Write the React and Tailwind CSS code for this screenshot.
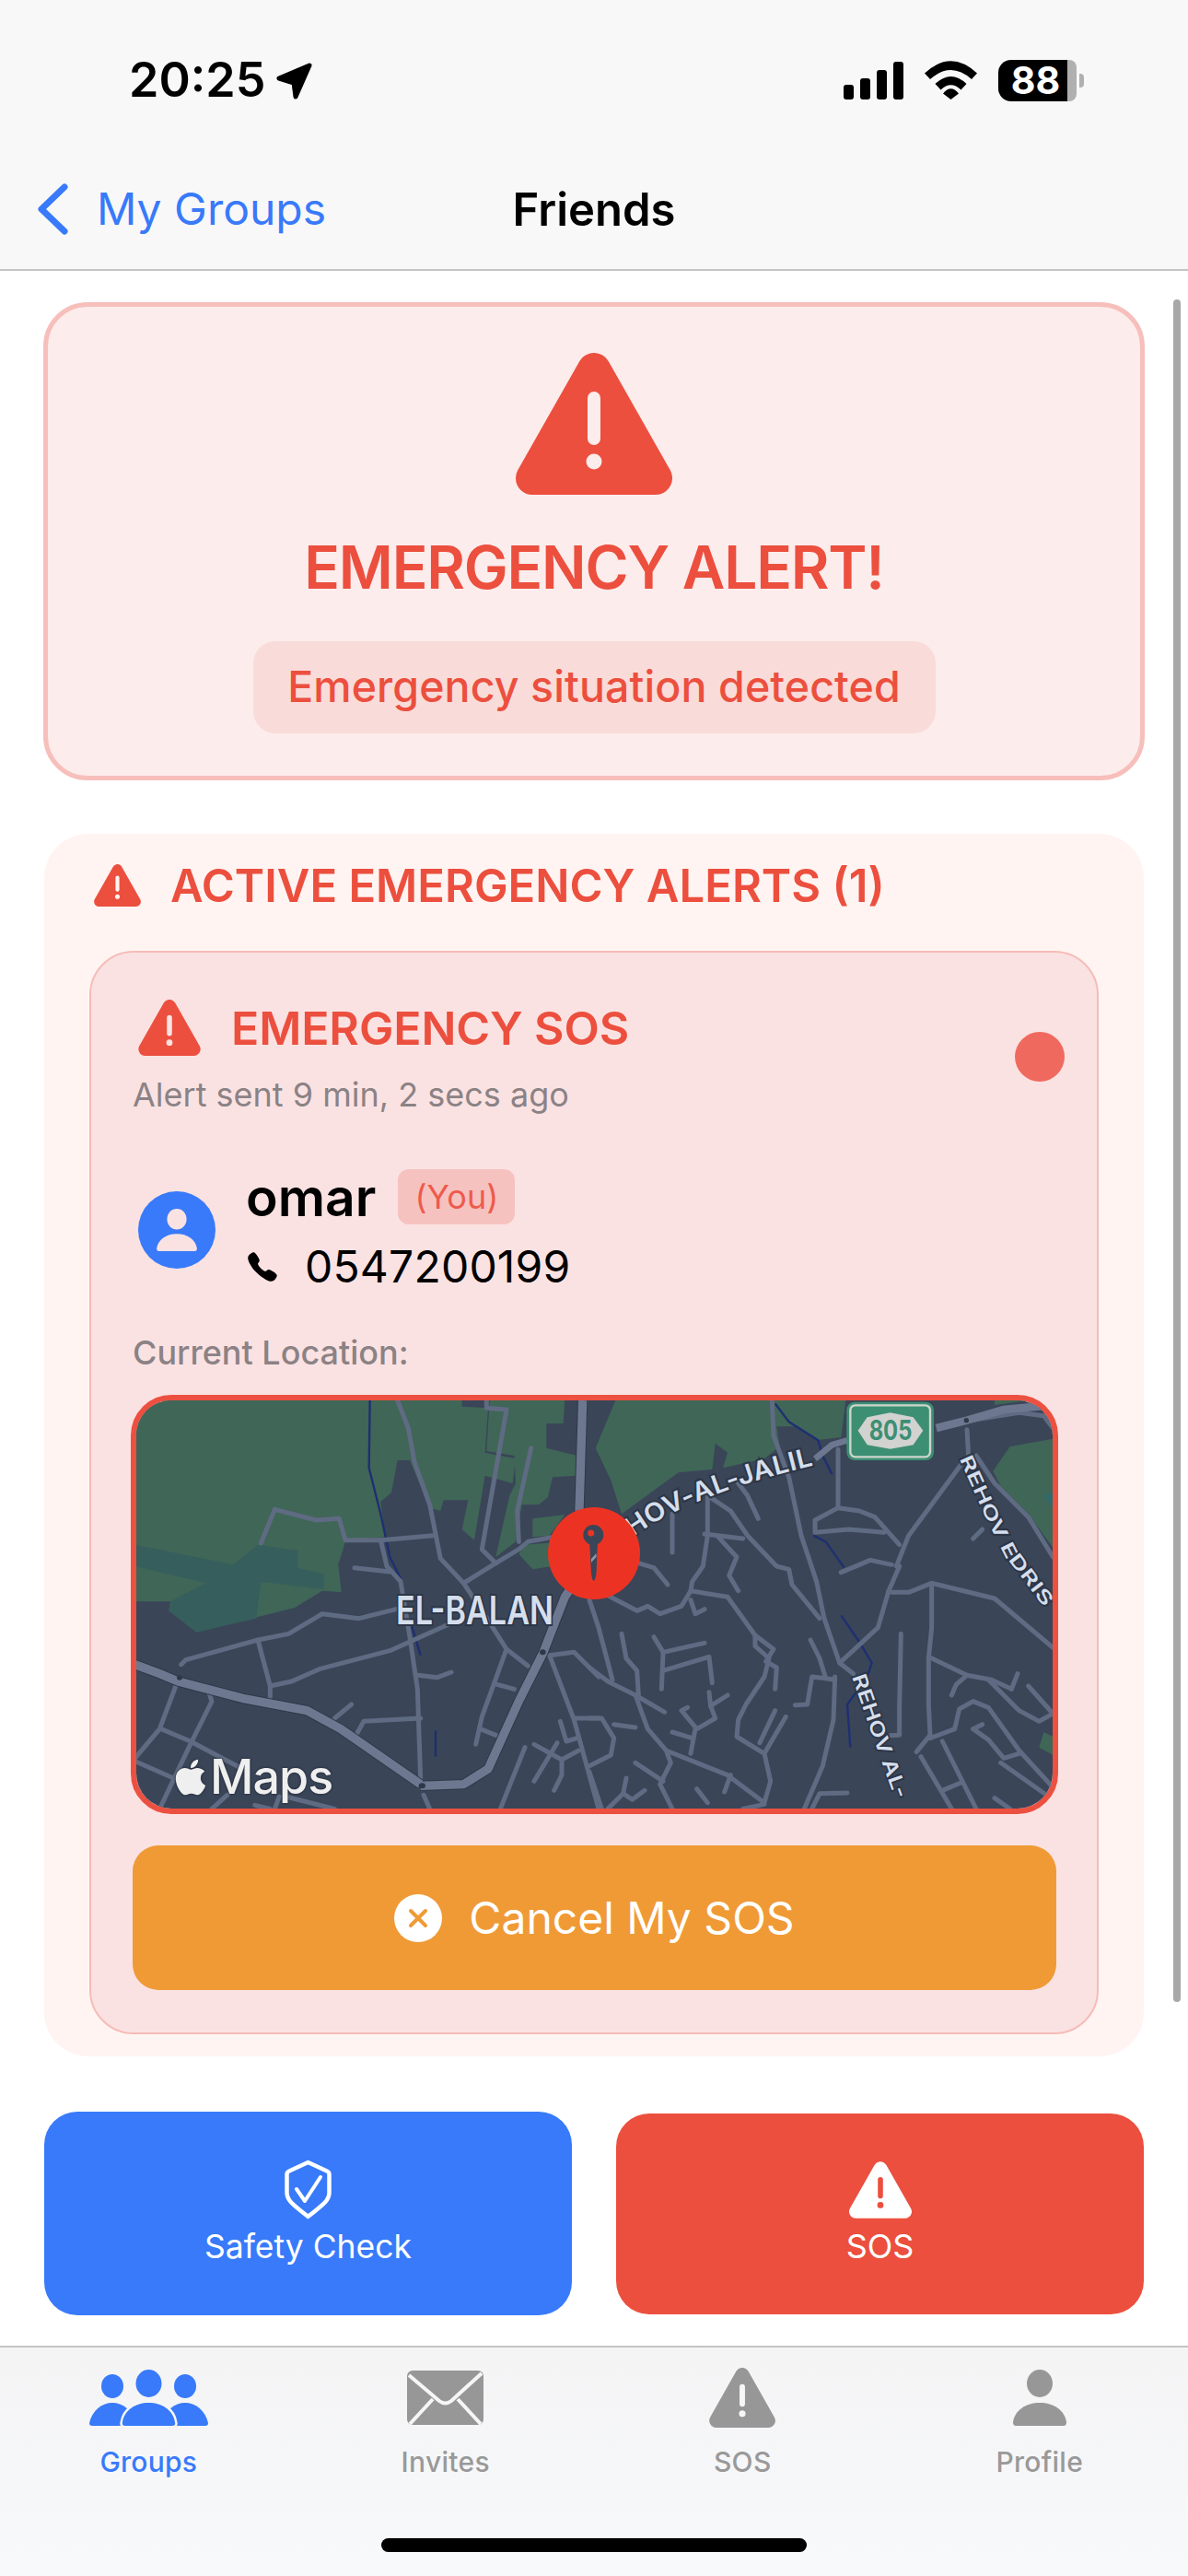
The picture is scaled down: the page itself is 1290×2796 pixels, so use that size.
import { FaApple } from 'react-icons/fa';
import { IoCall } from 'react-icons/io5';

const INK = 'font-[family-name:Inter,sans-serif]';

// map strokes, written in the coordinates of two 3x crops of the map
const leftRoads = [
  'M505 415 L460 525', 'M505 415 L640 450 L715 445 L735 515 L850 515 L1020 500',
  'M905 60 L940 150 L960 260 L1010 400 L1045 575 L1120 655 L1190 760 L1260 870 L1330 925',
  'M850 515 L870 600 L915 650 L945 830 L970 1000 L980 1290', 'M765 605 L880 618',
  'M1120 655 L1225 590 L1300 545 L1330 520 L1440 500', 'M1225 590 L1180 545 L1260 90 L1195 85 L1195 60',
  'M1340 215 L1295 420 L1300 520', 'M200 920 L215 905 L450 840 L550 820 L660 755 L780 770 L900 740',
  'M450 840 L490 990 L490 1025', 'M490 990 L560 975 L650 935 L880 875 L1070 790', 'M970 955 L1035 962 L1080 945',
  'M700 1095 L755 1050', 'M770 1150 L795 1105 L980 1095', 'M190 970 L130 1130 L50 1225',
  'M290 1010 L300 1040 L230 1180 L130 1390', 'M135 1130 L230 1170 L400 1260', 'M50 1235 L175 1290',
  'M1260 870 L1180 1090 L1160 1180', 'M1230 985 L1285 1000', 'M1175 1130 L1225 1150',
  'M1400 890 L1480 880 L1560 960', 'M1400 890 L1480 1100 L1560 1390', 'M1480 1095 L1560 1095',
  'M1320 1190 L1240 1390', 'M1350 1180 L1440 1230 L1495 1200', 'M1425 1175 L1350 1300',
  'M1440 1235 L1440 1280 L1415 1330', 'M1435 1105 L1455 1170 L1490 1160', 'M990 1345 L1010 1390',
  'M350 1345 L300 1390', 'M520 1350 L505 1390', 'M440 1378 L490 1390', 'M540 1350 L700 1390',
];
const leftMain = [
  'M50 920 L130 950 L190 975 L400 1030 L610 1070 L720 1130 L980 1310',
  'M980 1315 L1120 1310 L1200 1260 L1300 1040 L1380 880 L1450 700 L1490 640',
  'M1508 60 L1497 420',
];
const leftWater = ['M815 60 L812 280 L850 430 L880 570 L915 640', 'M925 680 L925 780', 'M950 790 L980 890', 'M1029 1135 L1029 1220'];

const rightRoads = [
  'M595 60 L600 175 L650 310 L690 500 L740 650 L765 770 L815 915', 'M485 330 L515 370 L550 445',
  'M385 370 L385 500 L370 600 L335 650 L330 680 L300 730 L230 755 L190 730 L155 745 L60 695',
  'M385 370 L460 420 L515 500 L610 600 L650 610 L660 660 L750 770', 'M375 495 L500 510',
  'M420 505 L480 570 L455 630 L485 680', 'M330 680 L450 700 L540 825 L600 870 L575 910 L610 930 L605 1000',
  'M540 825 L540 860 L585 900 L570 960 L510 1050 L485 1100 L480 1155 L570 1210 L640 1090', 'M555 1175 L605 1070',
  'M330 710 L345 755 L375 740', 'M270 430 L270 555', 'M160 590 L210 605 L255 660', 'M720 840 L750 900 L770 965 L800 970',
  'M770 965 L725 960 L710 1050 L670 1052', 'M810 220 L810 410 L880 420 L930 440 L1010 530',
  'M810 410 L735 450 L735 490 L845 480 L960 490', 'M820 620 L915 580 L985 595', 'M1230 155 L1235 240',
  'M1000 600 L1040 500 L1210 270', 'M975 680 L1010 600', 'M975 680 L940 800 L815 915',
  'M985 685 L1040 685 L1115 655 L1320 705 L1510 865', 'M1115 660 L1115 800 L1105 900 L1105 1050 L1110 1150',
  'M1015 820 L1010 1060 L1010 1150 L965 1152', 'M1105 895 L1230 955 L1310 970 L1375 1000 L1395 950',
  'M1230 955 L1195 985 L1180 1020', 'M1300 970 L1400 1070 L1465 1105 L1510 1080 L1430 990', 'M1110 1150 L1065 1205',
  'M1110 1160 L1190 1130 L1205 1065 L1250 1040 L1300 1060 L1400 1200 L1510 1320', 'M1080 1220 L1180 1390',
  'M1150 1170 L1260 1390', 'M1150 1330 L1210 1305', 'M1320 1355 L1370 1390', 'M1250 1130 L1280 1115',
  'M1250 1130 L1300 1165 L1350 1225 L1400 1210', 'M1340 1240 L1510 1360', 'M815 915 L860 950',
  'M800 960 L795 1100 L760 1250 L700 1390', 'M0 710 L30 800 L75 970',
  'M0 930 L60 975 L150 1020 L190 1130 L250 1200 L450 1280 L570 1370 L590 1300 L570 1210', 'M150 1020 L245 1075',
  'M105 820 L120 900 L155 940 L160 1020', 'M210 830 L240 880 L235 1000', 'M240 880 L375 850', 'M240 940 L390 895 L400 980',
  'M390 1010 L395 1055 L450 1020', 'M395 1055 L410 1095 L350 1130 L300 1070 L320 1060', 'M345 1130 L330 1210',
  'M270 1140 L335 1160', 'M250 1200 L265 1240 L230 1310 L270 1390', 'M150 1240 L240 1300', 'M120 1290 L110 1340 L140 1360 L180 1330',
  'M60 1390 L110 1340', 'M350 1325 L385 1370', 'M440 1335 L460 1280', 'M0 1095 L40 1095 L80 1160 L70 1215 L0 1250',
  'M80 1115 L150 1125', 'M0 1270 L40 1390', 'M725 1390 L750 1340 L840 1338', 'M500 1390 L570 1375',
  'M1240 125 L1400 100 L1480 110 L1510 150', 'M1260 240 L1320 330 L1430 440 L1510 570', 'M1280 480 L1250 510',
];
const rightWater = ['M605 70 L650 130 L745 190 L760 240 L790 300', 'M730 500 L770 520 L830 605', 'M820 760 L875 840 L920 915 L905 960 L840 1050 L850 1190'];

function MapDrawing() {
  const label = 'fill-[#d5deec] stroke-[#2d3646] font-semibold [paint-order:stroke]';
  return (
    <svg viewBox="0 0 995 443" className="block w-full h-[443px]">
      <rect width="995" height="443" fill="#3a4558" />
      <g transform="translate(-18 -20) scale(0.33333)">
        <path fill="#3f6657" d="M50 60 L1115 60 L1115 80 L1200 85 L1190 230 L1290 250 L1280 330 L1190 305 L1155 515 L1115 480 L1135 385 L1055 385 L1045 420 L1010 410 L945 255 L905 255 L885 360 L850 390 L865 505 L735 520 L712 595 L722 685 L660 680 L570 735 L250 815 L160 745 L165 715 L50 715 Z" />
        <path fill="#365e5c" d="M50 530 L370 595 L450 530 L580 550 L580 605 L665 625 L665 675 L460 650 L445 770 L250 815 L160 745 L165 715 L280 655 L50 600 Z" />
        <path fill="#3f6657" d="M1205 60 L1450 60 L1445 135 L1390 135 L1390 215 L1490 240 L1490 305 L1410 310 L1395 375 L1365 400 L1310 400 L1290 520 L1225 570 L1270 370 L1290 330 L1285 240 L1195 225 Z" />
        <path fill="#3f6657" d="M1345 445 L1450 432 L1400 500 L1345 505 Z M1300 560 L1345 610 L1410 600 L1450 520 L1320 530 Z" />
        {leftWater.map((d) => <path key={d} d={d} fill="none" stroke="#1e2f72" strokeWidth="7" />)}
        {leftRoads.map((d) => <path key={d} d={d} fill="none" stroke="#5f6b82" strokeWidth="15" strokeLinecap="round" strokeLinejoin="round" />)}
        {leftMain.map((d) => <path key={d} d={d} fill="none" stroke="#2f3848" strokeWidth="34" strokeLinejoin="round" />)}
        {leftMain.map((d) => <path key={d} d={d} fill="none" stroke="#6d7890" strokeWidth="28" strokeLinejoin="round" />)}
        <ellipse cx="195" cy="963" rx="9" ry="8" fill="#2f3848" />
        <ellipse cx="1378" cy="880" rx="10" ry="9" fill="#2f3848" />
        <ellipse cx="985" cy="1315" rx="11" ry="9" fill="#2f3848" />
      </g>
      <g transform="translate(492 -20) scale(0.33333)">
        <path fill="#3f6657" d="M85 60 L20 215 L70 320 L105 430 L290 295 L400 285 L410 200 L450 230 L435 280 L570 250 L620 210 L610 145 L680 145 L740 190 L820 180 L835 60 Z" />
        <path fill="#3f6657" d="M1510 185 L1370 210 L1315 290 L1340 340 L1430 430 L1510 540 Z M1510 1215 L1465 1190 L1480 1140 L1510 1155 Z M1320 60 L1430 60 L1320 75 Z" />
        <path fill="#2f6a6c" d="M1480 370 L1510 360 L1510 410 Z" />
        {rightWater.map((d) => <path key={d} d={d} fill="none" stroke="#1e2f72" strokeWidth="7" />)}
        {rightRoads.map((d) => <path key={d} d={d} fill="none" stroke="#5f6b82" strokeWidth="15" strokeLinecap="round" strokeLinejoin="round" />)}
        <path d="M1130 150 L1230 125 L1350 90 L1510 75" fill="none" stroke="#6d7890" strokeWidth="26" />
        <path d="M735 250 L790 205 L840 190" fill="none" stroke="#6d7890" strokeWidth="20" />
        <circle cx="1228" cy="125" r="8" fill="#2f3848" />
        <path id="jalil" d="M140 505 Q 340 360 760 265" fill="none" />
        <path id="edris" d="M1205 250 L1290 440 L1350 560 L1490 745" fill="none" />
        <path id="alj" d="M855 960 L925 1160 L1010 1400" fill="none" />
        <text className={`${INK} ${label}`} fontSize="84" strokeWidth="12" letterSpacing="1">
          <textPath href="#jalil" textLength="640" lengthAdjust="spacingAndGlyphs">HOV-AL-JALIL</textPath>
        </text>
        <text className={`${INK} ${label}`} fontSize="60" strokeWidth="10">
          <textPath href="#edris" textLength="560" lengthAdjust="spacingAndGlyphs">REHOV EDRIS</textPath>
        </text>
        <text className={`${INK} ${label}`} fontSize="64" strokeWidth="10">
          <textPath href="#alj" textLength="425" lengthAdjust="spacingAndGlyphs">REHOV AL-</textPath>
        </text>
        <rect x="838" y="65" width="284" height="190" rx="26" fill="#3d8f74" />
        <rect x="850" y="76" width="260" height="168" rx="16" fill="none" stroke="#cfd6cc" strokeWidth="7" />
        <path d="M875 158 L905 115 L980 100 L1055 115 L1087 158 L1055 205 L980 218 L905 205 Z" fill="#d2d2d0" />
        <text x="981" y="190" textAnchor="middle" fontSize="88" fontWeight="700" fill="#3d8f74" className={INK} textLength="140" lengthAdjust="spacingAndGlyphs">805</text>
      </g>
      <text x="282" y="243" fontSize="42" strokeWidth="4" className={`${INK} ${label}`} textLength="171" lengthAdjust="spacingAndGlyphs">EL-BALAN</text>
      <circle cx="497" cy="166" r="50" fill="#ec3323" />
      <circle cx="496.3" cy="146" r="11" fill="#3a4558" />
      <circle cx="493.7" cy="144" r="3.5" fill="#ec3323" />
      <path d="M492 152 L501 152 L499.5 188 Q496.5 204 494 188 Z" fill="#3a4558" />
      <path d="M494 172 L499.5 166 L499.5 170 L494 176 Z" fill="#8d97aa" />
    </svg>
  );
}

function Warn({ className, mark }) {
  return (
    <svg viewBox="0 0 170 154" className={className}>
      <polygon points="85,18 152,136 18,136" fill="currentColor" stroke="currentColor" strokeWidth="36" strokeLinejoin="round" />
      <rect x="78" y="42" width="14" height="58" rx="7" fill={mark} />
      <circle cx="85" cy="118" r="8.5" fill={mark} />
    </svg>
  );
}

function Shield() {
  return (
    <svg viewBox="0 0 53 65" className="w-[53px] h-[65px]" fill="none" stroke="#fff" strokeLinecap="round" strokeLinejoin="round">
      <path strokeWidth="4.5" d="M26.5 3 L47 12.5 Q49.5 13.5 49.5 16 V36 C49.5 44 44 48 26.5 62 C9 48 3.5 44 3.5 36 V16 Q3.5 13.5 6 12.5 Z" />
      <path strokeWidth="4" d="M14 32 L23 45 L40 19" />
    </svg>
  );
}

function Person({ className, head, body }) {
  return (
    <svg viewBox="0 0 58 61" className={className}>
      <ellipse cx="29" cy="15" rx="14" ry="15" fill={head} />
      <path d="M3 61 Q0 61 0 57 C2 44 14 36 29 36 C44 36 56 44 58 57 Q58 61 55 61 Z" fill={body} />
    </svg>
  );
}

function GroupsIcon() {
  return (
    <svg viewBox="0 0 129 61" className="w-[129px] h-[61px]" fill="#387afa">
      <ellipse cx="25" cy="18" rx="12" ry="13" />
      <ellipse cx="64.5" cy="15" rx="14" ry="15" />
      <ellipse cx="104" cy="18" rx="12" ry="13" />
      <path d="M3 61 Q0 61 0 58 C3 44 14 36 25 36 C36 36 47 44 50 58 Q50 61 47 61 Z" />
      <path d="M82 61 Q79 61 79 58 C82 44 93 36 104 36 C115 36 126 44 129 58 Q129 61 126 61 Z" />
      <path d="M39 61 Q35 61 36 57 C38 44 50 36 64.5 36 C79 36 91 44 93 57 Q94 61 90 61 Z" stroke="#f6f6f7" strokeWidth="5" paintOrder="stroke" />
    </svg>
  );
}

function Envelope() {
  return (
    <svg viewBox="0 0 83 59" className="w-[83px] h-[59px]">
      <rect width="83" height="59" rx="6" fill="#979797" />
      <path d="M2 5 L35 33 Q41.5 38 48 33 L81 3 M3 58 L28 31 M80 58 L55 31" fill="none" stroke="#f6f6f7" strokeWidth="4" />
    </svg>
  );
}

function StatusBar() {
  return (
    <div className="h-[174px] flex items-center justify-between pl-[140px] pr-[113px]">
      <div className="flex items-center gap-[11px]">
        <span className="text-[52px] leading-none font-semibold text-black">20:25</span>
        <svg viewBox="0 0 40 41" className="w-[40px] h-[41px]">
          <path d="M37 4 L4 18 L20 23 L22 38 Z" fill="#000" stroke="#000" strokeWidth="5" strokeLinejoin="round" />
        </svg>
      </div>
      <div className="flex items-center gap-[23px]">
        <div className="flex items-end gap-[7px] h-[41px]">
          <div className="w-[11px] h-[16px] rounded-[3px] bg-black" />
          <div className="w-[11px] h-[23px] rounded-[3px] bg-black" />
          <div className="w-[11px] h-[32px] rounded-[3px] bg-black" />
          <div className="w-[11px] h-[41px] rounded-[3px] bg-black" />
        </div>
        <svg viewBox="0 0 57 42" className="w-[57px] h-[42px]" fill="#000">
          <path d="M0 13.5 Q28.5 -13 57 13.5 L51 20 Q28.5 0 6 20 Z" />
          <path d="M11.5 25 Q28.5 9 45.5 25 L39.5 31.5 Q28.5 21 17.5 31.5 Z" />
          <path d="M20 35.5 Q28.5 25 37 35.5 L28.5 42 Z" />
        </svg>
        <div className="flex items-center gap-[3px]">
          <div className="w-[85px] h-[45px] flex">
            <div className="flex-1 rounded-l-[14px] bg-black flex items-center justify-center pl-[6px] text-white text-[41px] leading-none font-bold">88</div>
            <div className="w-[10px] rounded-r-[8px] bg-[#b0b0b0]" />
          </div>
          <div className="w-[5px] h-[15px] rounded-r-[4px] bg-[#b0b0b0]" />
        </div>
      </div>
    </div>
  );
}

function NavBar() {
  return (
    <div className="h-[106px] grid grid-cols-3 items-center">
      <div className="flex items-center pl-[41px] gap-[31px]">
        <svg viewBox="0 0 33 56" className="w-[33px] h-[56px]" fill="none" stroke="#387afa" strokeWidth="7" strokeLinecap="round" strokeLinejoin="round">
          <path d="M29 4 L4 28 L29 52" />
        </svg>
        <span className="text-[48px] leading-none whitespace-nowrap text-[#387afa]">My Groups</span>
      </div>
      <div className="text-center text-[49px] leading-none font-semibold text-black">Friends</div>
    </div>
  );
}

function AlertBanner() {
  return (
    <div className="h-[519px] border-[5px] border-[#f7bfbb] bg-[#fcecec] rounded-[48px] flex flex-col items-center pt-[50px]">
      <Warn className="w-[170px] h-[154px] text-[#ec4f3e]" mark="#fcecec" />
      <div className="mt-[40px] text-[64px] leading-[78px] font-semibold tracking-[-1.2px] text-[#ec4f3e]">EMERGENCY ALERT!</div>
      <div className="mt-[41px] h-[100px] w-[741px] rounded-[24px] bg-[#f9dcd9] flex items-center justify-center text-[46.5px] font-medium tracking-[0.1px] text-[#ec4f3e]">
        Emergency situation detected
      </div>
    </div>
  );
}

function SosCard() {
  return (
    <div className="relative border-2 border-[#f5bcb8] bg-[#fbe2e2] rounded-[48px] pl-[43px] pr-[42px] pt-[51px] pb-[46px]">
      <div className="absolute right-[35px] top-[86px] w-[54px] h-[54px] rounded-full bg-[#f0695f]" />
      <div className="flex items-center gap-[33px] pl-[8px]">
        <Warn className="w-[68px] h-[61px] text-[#ec4f3e]" mark="#fbe2e2" />
        <span className="text-[50px] leading-none font-semibold tracking-[-0.1px] text-[#ec4f3e]">EMERGENCY SOS</span>
      </div>
      <div className="mt-[20px] pl-[2px] text-[36px] leading-[44px] text-[#8b8285]">Alert sent 9 min, 2 secs ago</div>
      <div className="mt-[59px] flex items-center gap-[33px] pl-[8px]">
        <div className="w-[84px] h-[84px] rounded-full bg-[#387afa] flex items-center justify-center">
          <Person className="w-[44px] h-[46px]" head="#fbe2e2" body="#fbe2e2" />
        </div>
        <div>
          <div className="flex items-center h-[60px] gap-[24px]">
            <span className="text-[57px] leading-none font-semibold text-black">omar</span>
            <span className="h-[60px] w-[127px] rounded-[12px] bg-[#f5c2bf] flex items-center justify-center text-[36px] text-[#ee5a4c]">(You)</span>
          </div>
          <div className="mt-[20px] h-[51px] flex items-center gap-[28px]">
            <IoCall className="w-[36px] h-[36px] text-black" />
            <span className="text-[48px] leading-none tracking-[0.2px] text-black">0547200199</span>
          </div>
        </div>
      </div>
      <div className="mt-[46px] pl-[2px] text-[36px] leading-[44px] font-medium text-[#8b8285]">Current Location:</div>
      <div className="relative mt-[24px] h-[455px] border-[6px] border-[#ec5040] rounded-[44px] overflow-hidden">
        <MapDrawing />
        <div className="absolute left-[40px] bottom-[5px] flex items-center gap-[2px] text-[#efefef] [filter:drop-shadow(0_0_1.5px_#1c2230)]">
          <FaApple className="w-[38px] h-[44px]" />
          <span className="text-[52px] leading-[58px] font-medium tracking-[-1px]">Maps</span>
        </div>
      </div>
      <div className="mt-[34px] mx-[2px] h-[157px] rounded-[28px] bg-[#f09a36] flex items-center justify-center gap-[29px]">
        <svg viewBox="0 0 52 52" className="w-[52px] h-[52px]">
          <circle cx="26" cy="26" r="26" fill="#fff" />
          <path d="M18 18 L34 34 M34 18 L18 34" stroke="#f09a36" strokeWidth="4" strokeLinecap="round" />
        </svg>
        <span className="text-[48px] leading-none text-white">Cancel My SOS</span>
      </div>
    </div>
  );
}

function TabItem({ label, active, children }) {
  return (
    <div className="flex flex-col items-center">
      <div className="h-[65px] flex items-center justify-center">{children}</div>
      <div className={active ? 'mt-[19px] text-[30px] leading-[36px] font-medium tracking-[0.2px] text-[#387afa]' : 'mt-[19px] text-[30px] leading-[36px] font-medium tracking-[0.3px] text-[#999999]'}>{label}</div>
    </div>
  );
}

export default function App() {
  return (
    <div className={`${INK} w-[1290px] h-[2796px] bg-white flex flex-col overflow-hidden`}>
      <header className="h-[294px] bg-[#f8f8f8] border-b-2 border-[#c4c4c4]">
        <StatusBar />
        <NavBar />
      </header>

      <main className="relative flex-1 px-[47px] pt-[34px]">
        <div className="absolute left-[1274px] top-[31px] w-[8px] h-[1848px] rounded-full bg-[#a8a8a8]" />
        <AlertBanner />

        <section className="mt-[58px] mx-px bg-[#fff4f2] rounded-[48px] px-[49px] pt-[26px] pb-[24px]">
          <div className="h-[60px] flex items-center gap-[32px] pl-[5px]">
            <Warn className="w-[51px] h-[46px] text-[#ec4f3e]" mark="#fff4f2" />
            <span className="text-[49px] leading-none font-semibold text-[#ec4f3e]">ACTIVE EMERGENCY ALERTS (1)</span>
          </div>
          <div className="mt-[41px]">
            <SosCard />
          </div>
        </section>

        <div className="mt-[60px] mx-px h-[221px] grid grid-cols-2 gap-[48px] items-center text-white">
          <div className="h-[221px] rounded-[36px] bg-[#387afa] flex flex-col items-center justify-center">
            <Shield />
            <span className="mt-[8px] text-[35.5px] leading-[44px]">Safety Check</span>
          </div>
          <div className="h-[218px] rounded-[36px] bg-[#ec4f3e] flex flex-col items-center justify-center">
            <Warn className="w-[68px] h-[62px] text-white" mark="#ec4f3e" />
            <span className="mt-[8px] text-[36px] leading-[44px]">SOS</span>
          </div>
        </div>
      </main>

      <footer className="h-[250px] bg-linear-to-b from-[#f4f4f5] to-[#f8f9fb] border-t-2 border-[#c4c4c4] pt-[22px] flex flex-col">
        <div className="grid grid-cols-4">
          <TabItem label="Groups" active><GroupsIcon /></TabItem>
          <TabItem label="Invites"><Envelope /></TabItem>
          <TabItem label="SOS"><Warn className="w-[72px] h-[65px] text-[#979797]" mark="#f7f7f8" /></TabItem>
          <TabItem label="Profile"><Person className="w-[58px] h-[61px]" head="#979797" body="#979797" /></TabItem>
        </div>
        <div className="mt-[65px] mx-auto w-[462px] h-[15px] rounded-full bg-black" />
      </footer>
    </div>
  );
}
